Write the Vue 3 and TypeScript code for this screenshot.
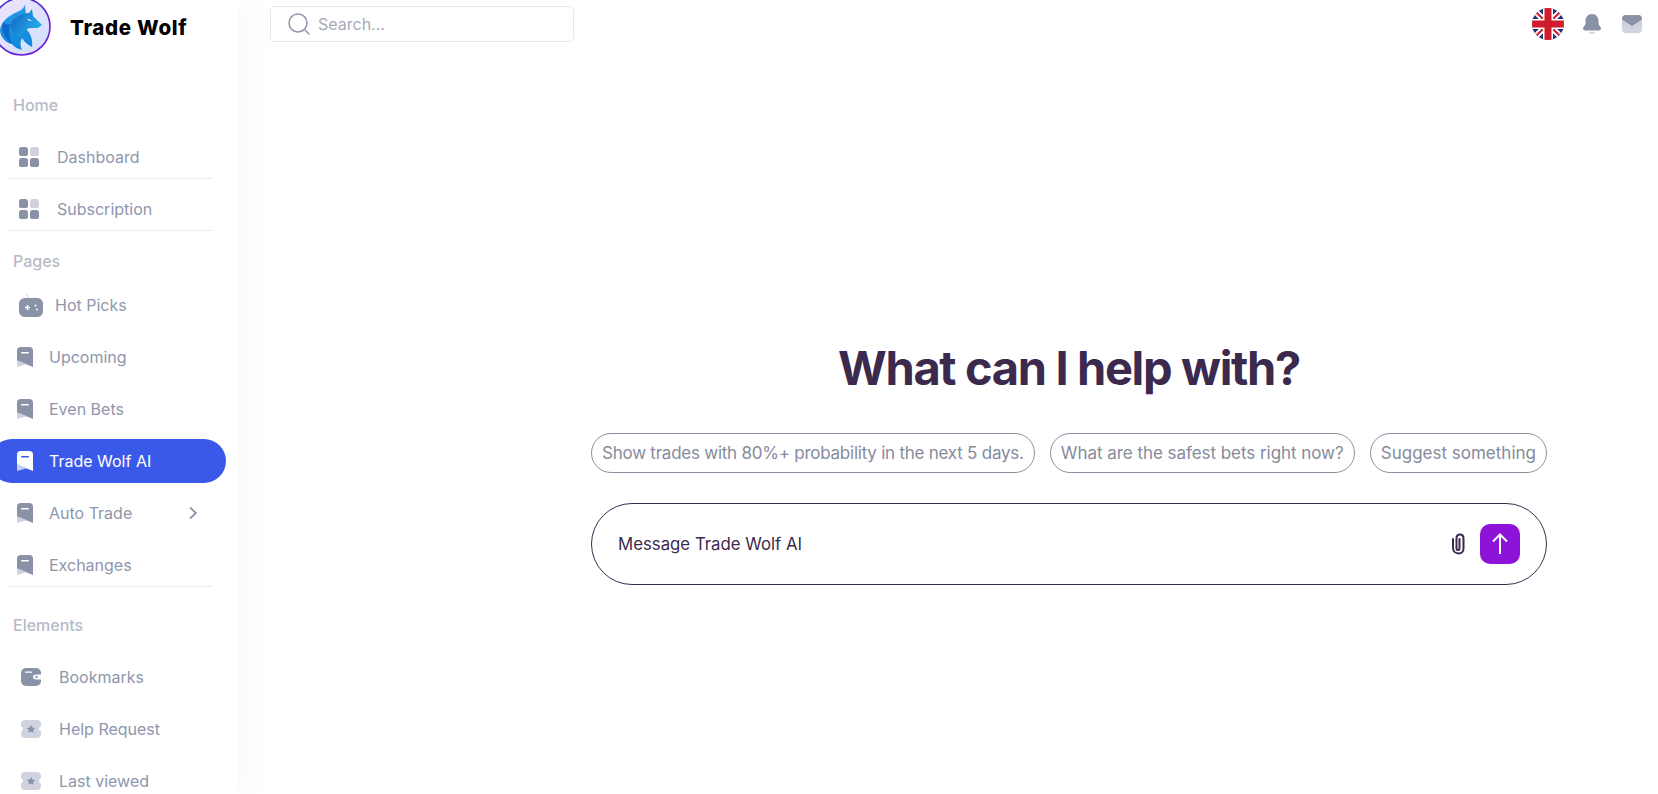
<script setup lang="ts">
type NavKind = "grid" | "game" | "mark" | "wallet" | "ticket";

interface NavItem {
  label: string;
  kind: NavKind;
  active?: boolean;
  divided?: boolean;
  chevron?: boolean;
}

interface NavSection {
  title: string;
  tight?: boolean;
  items: NavItem[];
}

const sections: NavSection[] = [
  {
    title: "Home",
    items: [
      { label: "Dashboard", kind: "grid", divided: true },
      { label: "Subscription", kind: "grid", divided: true },
    ],
  },
  {
    title: "Pages",
    tight: true,
    items: [
      { label: "Hot Picks", kind: "game" },
      { label: "Upcoming", kind: "mark" },
      { label: "Even Bets", kind: "mark" },
      { label: "Trade Wolf AI", kind: "mark", active: true },
      { label: "Auto Trade", kind: "mark", chevron: true },
      { label: "Exchanges", kind: "mark", divided: true },
    ],
  },
  {
    title: "Elements",
    items: [
      { label: "Bookmarks", kind: "wallet" },
      { label: "Help Request", kind: "ticket" },
      { label: "Last viewed", kind: "ticket" },
    ],
  },
];

const prompts = [
  "Show trades with 80%+ probability in the next 5 days.",
  "What are the safest bets right now?",
  "Suggest something",
];
</script>

<template>
  <div class="page">
    <aside class="sidebar">
      <div class="brand">
        <svg class="logo" viewBox="0 0 60 60" width="60" height="60">
          <defs>
            <linearGradient id="logo-bg" x1="0" y1="0" x2="1" y2="1">
              <stop offset="0" stop-color="#f0e4fc" />
              <stop offset="1" stop-color="#cfe0ff" />
            </linearGradient>
            <linearGradient id="logo-ring" x1="0" y1="0" x2="1" y2="1">
              <stop offset="0" stop-color="#3a35d8" />
              <stop offset="1" stop-color="#7a12d6" />
            </linearGradient>
            <linearGradient id="wolf-back" x1="0" y1="0" x2="0" y2="1">
              <stop offset="0" stop-color="#2a9ce6" />
              <stop offset="1" stop-color="#0e86dc" />
            </linearGradient>
            <linearGradient id="wolf-head" x1="0" y1="0" x2="1" y2="0.6">
              <stop offset="0" stop-color="#0f62c4" />
              <stop offset="1" stop-color="#27aeea" />
            </linearGradient>
          </defs>
          <circle cx="29.5" cy="29.5" r="28.5" fill="url(#logo-bg)" stroke="url(#logo-ring)" stroke-width="1.6" />
          <g transform="translate(8 3)">
            <path d="M25 4 C24 8 22 10 17 12 C8 16 1 22 0 30 C0 37 6 43 12 44 C14 47 18 49 22 50 C20 46 20 42 22 38 C24 42 28 45 32 47 C33 41 31 34 27 30 Z" fill="url(#wolf-back)" />
            <path d="M10 26 C12 19 20 13 29 13 L32 9 L33 16 L38 21 L42 25 L38 28 L30 28 C25 29 22 32 22 38 C17 36 12 32 10 26 Z" fill="url(#wolf-head)" />
            <path d="M3 22 C1 30 4 38 12 44 C9 37 8 30 10 24 C7 25 5 24 3 22 Z" fill="#0b69c7" />
            <path d="M27 18.5 L33 21 L28.5 20.6 Z" fill="#f4fbff" />
          </g>
        </svg>
        <span class="brand-name">Trade Wolf</span>
      </div>

      <nav>
        <section v-for="section in sections" :key="section.title">
          <h3 class="section-title" :class="{ tight: section.tight }">{{ section.title }}</h3>
          <a
            v-for="item in section.items"
            :key="item.label"
            class="nav-item"
            :class="[`kind-${item.kind}`, { active: item.active, divided: item.divided }]"
          >
            <svg v-if="item.kind === 'grid'" class="icon" width="20" height="20" viewBox="0 0 20 20">
              <rect width="9" height="9" rx="2.6" fill="#8a92a8" />
              <rect x="11" width="9" height="9" rx="2.6" fill="#d0d3df" />
              <rect y="11" width="9" height="9" rx="2.6" fill="#8a92a8" />
              <rect x="11" y="11" width="9" height="9" rx="2.6" fill="#8a92a8" />
            </svg>
            <svg v-else-if="item.kind === 'game'" class="icon" width="24" height="24" viewBox="0 0 24 24">
              <path d="M9 5.5 C9.5 3.5 8.5 2.5 7 1.5" fill="none" stroke="#c9cdd9" stroke-width="1" />
              <path d="M6 5 H18 C21.5 5 24 7.5 24 11 V18 C24 21.5 21.5 24 18 24 H6 C2.5 24 0 21.5 0 18 V11 C0 7.5 2.5 5 6 5 Z" fill="#8a92a8" />
              <path d="M6 14.5 H11 M8.5 12 V17" stroke="#fff" stroke-width="1.5" />
              <circle cx="16.5" cy="12.5" r="1" fill="#fff" />
              <circle cx="18" cy="16.5" r="1" fill="#fff" />
            </svg>
            <svg v-else-if="item.kind === 'mark'" class="icon" width="16" height="20" viewBox="0 0 16 20">
              <path d="M0 3.5 C0 1.5 1.5 0 3.5 0 H12.5 C14.5 0 16 1.5 16 3.5 V20 L0 13.5 Z" :fill="item.active ? '#fff' : '#8a92a8'" />
              <path d="M0 13.5 V20 L10 17.2 Z" :fill="item.active ? '#c6cff8' : '#d0d3df'" />
              <rect x="4" y="5" width="8" height="1.6" rx="0.8" :fill="item.active ? '#3b59e8' : '#fff'" />
            </svg>
            <svg v-else-if="item.kind === 'wallet'" class="icon" width="20" height="18" viewBox="0 0 20 18">
              <rect width="20" height="18" rx="5" fill="#8a92a8" />
              <rect x="4" y="3.5" width="7" height="1.3" rx="0.6" fill="#fff" />
              <path d="M20 6.5 H15 C13 6.5 12 7.7 12 9 C12 10.3 13 11.5 15 11.5 H20 Z" fill="#fff" />
              <circle cx="15.5" cy="9" r="1.2" fill="#8a92a8" />
            </svg>
            <svg v-else class="icon" width="20" height="18" viewBox="0 0 20 18">
              <path d="M4 0 H16 C18.5 0 20 1.5 20 4 V6.5 C18.5 7 18 8 18 9 C18 10 18.5 11 20 11.5 V14 C20 16.5 18.5 18 16 18 H4 C1.5 18 0 16.5 0 14 V11.5 C1.5 11 2 10 2 9 C2 8 1.5 7 0 6.5 V4 C0 1.5 1.5 0 4 0 Z" fill="#d0d3df" />
              <path d="M10 4.8 L11.3 7.5 L14.2 7.9 L12.1 9.9 L12.6 12.8 L10 11.4 L7.4 12.8 L7.9 9.9 L5.8 7.9 L8.7 7.5 Z" fill="#8a92a8" />
            </svg>
            <span class="nav-label">{{ item.label }}</span>
            <svg v-if="item.chevron" class="chevron" width="10" height="14" viewBox="0 0 10 14">
              <path d="M2 1.5 L8 7 L2 12.5" fill="none" stroke="#8a92a8" stroke-width="1.7" />
            </svg>
          </a>
        </section>
      </nav>
    </aside>

    <main class="main">
      <header class="topbar">
        <div class="search">
          <svg width="24" height="24" viewBox="0 0 24 24">
            <circle cx="11" cy="11" r="9" fill="none" stroke="#9198ac" stroke-width="1.5" />
            <path d="M17.5 17.5 L22 22" stroke="#9198ac" stroke-width="1.5" stroke-linecap="round" />
          </svg>
          <span>Search...</span>
        </div>
        <div class="top-actions">
          <svg class="flag" width="32" height="32" viewBox="0 0 32 32">
            <defs>
              <clipPath id="flag-clip"><circle cx="16" cy="16" r="16" /></clipPath>
            </defs>
            <g clip-path="url(#flag-clip)">
              <rect width="32" height="32" fill="#1a2f7d" />
              <path d="M0 0 L32 32 M32 0 L0 32" stroke="#fff" stroke-width="6" />
              <path d="M0 0 L32 32 M32 0 L0 32" stroke="#cf1b2b" stroke-width="2" />
              <path d="M16 0 V32 M0 16 H32" stroke="#fff" stroke-width="10" />
              <path d="M16 0 V32 M0 16 H32" stroke="#cf1b2b" stroke-width="7" />
            </g>
          </svg>
          <svg class="bell" width="18" height="20" viewBox="0 0 18 20">
            <path d="M9 0 C13.5 0 15.5 3.5 15.5 7 V9.5 C15.5 11.5 18 12.5 18 14.5 C18 15.8 17 16.5 16 16.5 H2 C1 16.5 0 15.8 0 14.5 C0 12.5 2.5 11.5 2.5 9.5 V7 C2.5 3.5 4.5 0 9 0 Z" fill="#8a92a8" />
            <path d="M6 17.8 H12 C11.5 19.3 10.5 20 9 20 C7.5 20 6.5 19.3 6 17.8 Z" fill="#d0d3df" />
          </svg>
          <svg class="mail" width="20" height="18" viewBox="0 0 20 18">
            <rect width="20" height="18" rx="4" fill="#d0d3df" />
            <path d="M0 4 C0 1.5 1.5 0 4 0 H16 C18.5 0 20 1.5 20 4 V4.5 L10 11 L0 4.5 Z" fill="#8a92a8" />
          </svg>
        </div>
      </header>

      <div class="chat">
        <h1 class="headline">What can I help with?</h1>
        <div class="prompts">
          <button v-for="prompt in prompts" :key="prompt" class="prompt" type="button">{{ prompt }}</button>
        </div>
        <div class="composer">
          <span class="placeholder">Message Trade Wolf AI</span>
          <svg class="clip" width="16" height="22" viewBox="0 0 16 22">
            <path d="M8.5 6 V15.5 C8.5 16.5 7.8 17 7 17 C6.2 17 5.5 16.5 5.5 15.5 V5.5 C5.5 3 7 1.5 9 1.5 C11 1.5 12.5 3 12.5 5.5 V15.5 C12.5 18.5 10.5 20.5 8 20.5 C5 20.5 2 18.5 2 15 V6" fill="none" stroke="#3b2a4d" stroke-width="2" stroke-linecap="round" />
          </svg>
          <button class="send" type="button" aria-label="Send">
            <svg width="16" height="22" viewBox="0 0 16 22">
              <path d="M8 21 V2 M1 8.5 L8 1.5 L15 8.5" fill="none" stroke="#fff" stroke-width="2" />
            </svg>
          </button>
        </div>
      </div>
    </main>
  </div>
</template>

<style>
html,
body {
  margin: 0;
  background: #fff;
  overflow: hidden;
}
</style>

<style scoped>
.page {
  display: flex;
  height: 794px;
  overflow: hidden;
  font-family: Inter, "Liberation Sans", sans-serif;
  background: #fff;
}

.sidebar {
  flex: 0 0 238px;
  box-shadow: 0 0 40px rgba(90, 100, 180, 0.05);
  overflow: hidden;
  position: relative;
}

.brand {
  display: flex;
  align-items: center;
  gap: 18px;
  margin: -3px 0 0 -8px;
}

.logo {
  flex: none;
}

.brand-name {
  font-size: 20.5px;
  font-weight: 800;
  color: #000;
  letter-spacing: 0.7px;
}

section {
  display: flow-root;
}

.section-title {
  margin: 19px 0;
  padding-left: 13px;
  font-size: 16px;
  line-height: 22px;
  font-weight: 500;
  color: #b6bbc7;
}

.section-title.tight {
  margin: 11px 0;
}

section:first-child .section-title {
  margin: 37px 0 19px;
}

.nav-item {
  display: flex;
  align-items: center;
  box-sizing: border-box;
  height: 44px;
  width: 205px;
  margin: 0 0 8px 7px;
  color: #8f96ad;
  font-size: 16px;
}

.nav-item.divided {
  border-bottom: 1px solid #e9ebf0;
}

.icon {
  flex: none;
}

.kind-grid {
  padding-left: 12px;
  gap: 18px;
}

.kind-game {
  padding-left: 12px;
  gap: 12px;
}

.kind-mark {
  padding-left: 10px;
  gap: 16px;
}

.kind-wallet,
.kind-ticket {
  padding-left: 14px;
  gap: 18px;
}

.nav-item.active {
  width: 236px;
  margin-left: -10px;
  padding-left: 27px;
  border-radius: 22px;
  background: #3b59e8;
  color: #fff;
}

.chevron {
  margin-left: auto;
  margin-right: 14px;
}

.main {
  flex: 1;
  min-width: 0;
  display: flex;
  flex-direction: column;
}

.topbar {
  display: flex;
  align-items: flex-start;
  justify-content: space-between;
  padding: 6px 16px 0 32px;
}

.search {
  box-sizing: border-box;
  display: flex;
  align-items: center;
  gap: 7px;
  width: 304px;
  height: 36px;
  padding-left: 16px;
  border: 1px solid #e6e8ee;
  border-radius: 4px;
  color: #a5abb8;
  font-size: 16px;
}

.top-actions {
  display: flex;
  align-items: center;
  margin-top: 2px;
}

.bell {
  margin-left: 19px;
}

.mail {
  margin-left: 21px;
}

.chat {
  align-self: flex-start;
  box-sizing: border-box;
  width: 956px;
  margin: 297px 0 0 353px;
  display: flex;
  flex-direction: column;
  align-items: center;
  color: #3b2a4d;
}

.headline {
  margin: 0;
  font-size: 47px;
  line-height: 58px;
  font-weight: 700;
  letter-spacing: -1.35px;
}

.prompts {
  display: flex;
  justify-content: space-between;
  align-self: stretch;
  margin-top: 36px;
}

.prompt {
  height: 40px;
  padding: 0 10px;
  border: 1px solid #8a90a0;
  border-radius: 20px;
  background: #fff;
  font-family: inherit;
  font-size: 17px;
  color: #858b9b;
  white-space: nowrap;
}

.prompt:first-child {
  letter-spacing: -0.24px;
}

.prompt:nth-child(2) {
  letter-spacing: -0.05px;
}

.composer {
  box-sizing: border-box;
  align-self: stretch;
  display: flex;
  align-items: center;
  height: 82px;
  margin-top: 30px;
  padding: 0 26px;
  border: 1px solid #3b2a4d;
  border-radius: 41px;
}

.placeholder {
  flex: 1;
  font-size: 16.8px;
}

.send {
  display: flex;
  align-items: center;
  justify-content: center;
  width: 40px;
  height: 40px;
  margin-left: 13px;
  padding: 0;
  border: 0;
  border-radius: 10px;
  background: #8d13d8;
}
</style>
